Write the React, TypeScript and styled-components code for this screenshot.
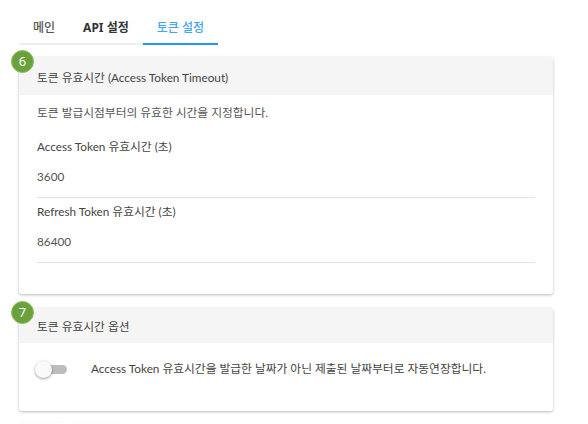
import React from "react";
import styled, { createGlobalStyle } from "styled-components";

const Global = createGlobalStyle`
  html, body { margin: 0; padding: 0; background: #fff; }
  body { font-family: Lato, "Noto Sans CJK KR", sans-serif; color: #444; }
`;

const Page = styled.div`
  padding: 13px 35px 0 19px;
  display: flex;
  flex-direction: column;
`;

const TabBar = styled.div`
  display: flex;
  align-self: flex-start;
  border-bottom: 2px solid #eeeeee;
  margin-bottom: 12px;
`;

const Tab = styled.div<{ $active?: boolean; $bold?: boolean }>`
  padding: 7px 14px 7px;
  font-family: "Noto Sans", "Noto Sans CJK KR", sans-serif;
  font-size: 12px;
  line-height: 16px;
  font-weight: ${(p) => (p.$bold ? 700 : 500)};
  color: ${(p) => (p.$active ? "#42a5f5" : p.$bold ? "#333" : "#555")};
  margin-bottom: -2px;
  border-bottom: 2px solid ${(p) => (p.$active ? "#2196f3" : "transparent")};
`;

const Card = styled.div<{ $mb: number }>`
  position: relative;
  background: #fff;
  border-radius: 3px;
  box-shadow: 0 1px 3px rgba(0, 0, 0, 0.28);
  margin-bottom: ${(p) => p.$mb}px;
`;

const Badge = styled.div`
  position: absolute;
  left: -8px;
  top: -7px;
  width: 21px;
  height: 21px;
  border-radius: 50%;
  background: #6ba13c;
  border: 1px solid #8cc05c;
  color: #fff;
  font-family: "Noto Sans", sans-serif;
  font-size: 13px;
  line-height: 21px;
  text-align: center;
`;

const Header = styled.div<{ $h: number }>`
  background: #f5f5f5;
  height: ${(p) => p.$h}px;
  display: flex;
  align-items: center;
  padding: 0 18px;
  font-size: 11.75px;
  color: #444;
  border-radius: 3px 3px 0 0;
`;

const Body = styled.div<{ $pt: number; $pb: number }>`
  padding: ${(p) => p.$pt}px 18px ${(p) => p.$pb}px;
  display: flex;
  flex-direction: column;
  font-size: 11.75px;
  line-height: 16px;
  color: #555;
`;

const Desc = styled.div`
  margin-bottom: 18px;
`;

const Field = styled.div<{ $first?: boolean }>`
  display: flex;
  flex-direction: column;
  padding-top: ${(p) => (p.$first ? 0 : 6)}px;
  padding-bottom: 12px;
  border-bottom: 1px solid #e2e2e2;
  gap: 14px;
`;

const Label = styled.div`
  color: #444;
`;

const Value = styled.div`
  color: #555;
`;

const Row = styled.div`
  display: flex;
  align-items: center;
`;

const Switch = styled.div`
  position: relative;
  width: 24px;
  height: 9px;
  margin-left: 6px;
  border-radius: 5px;
  background: #bdbdbd;
  margin-right: 24px;
`;

const Thumb = styled.div`
  position: absolute;
  left: -8px;
  top: -4px;
  width: 17px;
  height: 17px;
  border-radius: 50%;
  background: #fafafa;
  box-shadow: 0 1px 3px rgba(0, 0, 0, 0.4);
`;

const Text = styled.div`
  color: #444;
`;

const Buttons = styled.div`
  display: flex;
  gap: 10px;
`;

const Btn = styled.div`
  width: 45px;
  height: 20px;
  border-radius: 3px;
  box-shadow: 0 1px 3px rgba(0, 0, 0, 0.2);
`;

export default function App() {
  return (
    <>
      <Global />
      <Page>
        <TabBar>
          <Tab>메인</Tab>
          <Tab $bold>API 설정</Tab>
          <Tab $active>토큰 설정</Tab>
        </TabBar>
        <Card $mb={14}>
          <Badge>6</Badge>
          <Header $h={38}>토큰 유효시간 (Access Token Timeout)</Header>
          <Body $pt={10} $pb={31}>
            <Desc>토큰 발급시점부터의 유효한 시간을 지정합니다.</Desc>
            <Field $first>
              <Label>Access Token 유효시간 (초)</Label>
              <Value>3600</Value>
            </Field>
            <Field>
              <Label>Refresh Token 유효시간 (초)</Label>
              <Value>86400</Value>
            </Field>
          </Body>
        </Card>
        <Card $mb={12}>
          <Badge>7</Badge>
          <Header $h={35}>토큰 유효시간 옵션</Header>
          <Body $pt={18} $pb={34}>
            <Row>
              <Switch>
                <Thumb />
              </Switch>
              <Text>Access Token 유효시간을 발급한 날짜가 아닌 제출된 날짜부터로 자동연장합니다.</Text>
            </Row>
          </Body>
        </Card>
        <Buttons>
          <Btn />
          <Btn />
        </Buttons>
      </Page>
    </>
  );
}
